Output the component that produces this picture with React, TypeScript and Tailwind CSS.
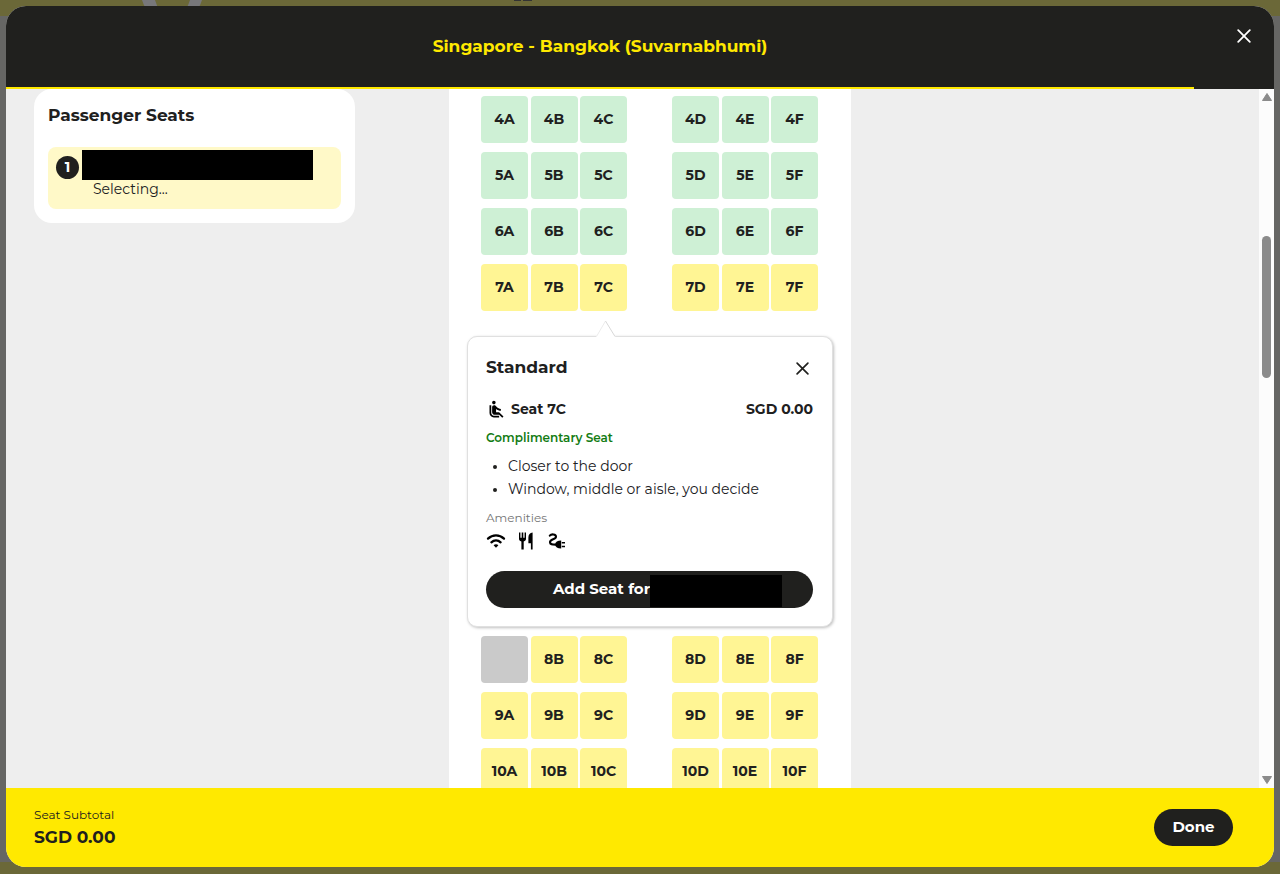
import { MdAirlineSeatReclineNormal } from "react-icons/md";

type SeatKind = "hot" | "standard" | "taken";

interface Seat {
  label: string;
  kind: SeatKind;
}

const LETTERS = ["A", "B", "C", "D", "E", "F"];

const seatColors: Record<SeatKind, string> = {
  hot: "bg-[#cef0d5]",
  standard: "bg-[#fff594]",
  taken: "bg-[#cacaca]",
};

function buildRow(num: number, kind: SeatKind, taken: string[] = []): Seat[] {
  return LETTERS.map((l) => ({
    label: `${num}${l}`,
    kind: taken.includes(l) ? "taken" : kind,
  }));
}

const rowsAbove = [
  buildRow(4, "hot"),
  buildRow(5, "hot"),
  buildRow(6, "hot"),
  buildRow(7, "standard"),
];
const rowsBelow = [
  buildRow(8, "standard", ["A"]),
  buildRow(9, "standard"),
  buildRow(10, "standard"),
];

function CloseIcon({ size }: { size: number }) {
  return (
    <svg width={size} height={size} viewBox="0 0 14 14" fill="none" stroke="currentColor" strokeWidth="1.8" strokeLinecap="round" aria-hidden>
      <path d="M1.2 1.2 12.8 12.8M12.8 1.2 1.2 12.8" />
    </svg>
  );
}

function WifiIcon() {
  return (
    <svg width="20" height="16" viewBox="0 0 20 16" aria-hidden>
      <path
        d="M2 5.6C6.500 1.200 13.500 1.200 18 5.600M5.400 9.300c2.600-2.500 6.600-2.500 9.200 0"
        fill="none"
        stroke="currentColor"
        strokeWidth="2.3"
        strokeLinecap="round"
      />
      <path d="M7.600 12.200c1.300-1.200 3.500-1.200 4.800 0L10 14.800Z" fill="currentColor" />
    </svg>
  );
}

function CutleryIcon() {
  return (
    <svg width="16" height="18" viewBox="0 0 16 18" fill="currentColor" aria-hidden>
      <path d="M1 .5h1.400v5.300h1.300V.5h1.600v5.300h1.300V.5H8v6.300c0 1.400-.800 2.200-2.300 2.600v8.100H3.400V9.400C1.800 9 1 8.200 1 6.800Z" />
      <path d="M14.600.5v17h-1.700v-6.300h-2.500V5.500c0-2.800 1.600-5 4.200-5Z" />
    </svg>
  );
}

function PowerIcon() {
  return (
    <svg width="18" height="16" viewBox="0 0 18 16" aria-hidden>
      <path
        d="M1.800 2.600C3.200.900 8 .800 8 3.700 8 6.700 2 6 2 9.300c0 2.200 2 2.300 5.500 2.300"
        fill="none"
        stroke="currentColor"
        strokeWidth="2.100"
        strokeLinecap="round"
      />
      <path d="M7 11.600C7.600 9 9.300 7.600 13.200 7.600v8c-3.900 0-5.600-1.400-6.200-4ZM13.800 9h3.200v1.600h-3.200ZM13.800 12.700h3.200v1.600h-3.200Z" fill="currentColor" />
    </svg>
  );
}

function SeatButton({ seat }: { seat: Seat }) {
  const taken = seat.kind === "taken";
  return (
    <button
      type="button"
      disabled={taken}
      aria-label={taken ? "Unavailable" : undefined}
      className={`h-[47px] w-[47px] rounded pb-0.5 text-sm font-bold ${seatColors[seat.kind]}`}
    >
      {taken ? null : seat.label}
    </button>
  );
}

function SeatRow({ seats }: { seats: Seat[] }) {
  return (
    <div className="flex justify-between pr-[33px] pl-8">
      {[seats.slice(0, 3), seats.slice(3)].map((group) => (
        <div key={group[0].label} className="flex w-[146px] justify-between">
          {group.map((seat) => (
            <SeatButton key={seat.label} seat={seat} />
          ))}
        </div>
      ))}
    </div>
  );
}

function SeatPopover() {
  return (
    <section
      aria-label="Seat 7C"
      className="relative mt-4 mr-[18px] ml-[18px] rounded-[10px] border border-[#e0e0e0] bg-white py-[18px] pr-[19px] pl-[18px] shadow-[1px_1px_3px_rgba(0,0,0,0.25)]"
    >
      <svg width="20" height="17" viewBox="0 0 20 17" className="absolute -top-[17px] left-[128px]" aria-hidden>
        <path d="M0 17 9.500 1 19.500 17Z" fill="#fff" />
        <path d="M.500 16.500 9.500 1" fill="none" stroke="#ececec" />
        <path d="M9.500 1 19 16.500" fill="none" stroke="#d8d8d8" />
      </svg>
      <div className="flex h-[26px] items-center justify-between">
        <h2 className="text-[17px] font-bold">Standard</h2>
        <button type="button" aria-label="Close seat details" className="mr-1">
          <CloseIcon size={13} />
        </button>
      </div>
      <div className="mt-4 flex h-6 items-center justify-between text-sm font-bold">
        <span className="flex items-center gap-1">
          <MdAirlineSeatReclineNormal size={21} className="text-black" />
          Seat 7C
        </span>
        <span>SGD 0.00</span>
      </div>
      <p className="mt-[9px] text-xs leading-4 font-semibold text-[#137c13]">Complimentary Seat</p>
      <ul className="mt-[9px] list-disc pl-[22px] text-sm leading-[23px] marker:text-xs">
        <li>Closer to the door</li>
        <li>Window, middle or aisle, you decide</li>
      </ul>
      <p className="mt-[9px] text-xs leading-4 text-[#757575]">Amenities</p>
      <div className="mt-[3px] flex h-6 items-center gap-3 text-black">
        <WifiIcon />
        <CutleryIcon />
        <span className="pl-0.5">
          <PowerIcon />
        </span>
      </div>
      <button
        type="button"
        className="mt-[18px] flex h-[37px] w-full items-center justify-center rounded-full bg-[#20201e] pl-9 text-[15px] font-bold text-white"
      >
        Add Seat for
        <span className="mt-[3px] h-8 w-[132px] bg-black" />
      </button>
    </section>
  );
}

function Scrollbar() {
  return (
    <div className="flex w-[15px] shrink-0 flex-col items-center bg-[#fcfcfc] py-1" aria-hidden>
      <svg width="10" height="8" viewBox="0 0 10 8" fill="#8b8b8b">
        <path d="M5 .500 9.500 7.500H.500Z" stroke="#8b8b8b" strokeLinejoin="round" />
      </svg>
      <div className="flex w-full grow flex-col items-center">
        <div className="basis-[20%]" />
        <div className="w-[9px] basis-[21%] rounded-full bg-[#8b8b8b]" />
      </div>
      <svg width="10" height="8" viewBox="0 0 10 8" fill="#8b8b8b">
        <path d="M5 7.500 9.500.500H.500Z" stroke="#8b8b8b" strokeLinejoin="round" />
      </svg>
    </div>
  );
}

export default function App() {
  return (
    <div className="relative h-screen bg-[#666664] font-['Montserrat',Inter,sans-serif] text-[#20201e]">
      <div className="absolute inset-x-0 top-0 h-4 overflow-hidden bg-[#6b6838]" aria-hidden>
        <svg width="540" height="16" viewBox="0 0 540 16">
          <path d="M142 0h13c2 6 4 11 8 16h-12c-4-4-7-10-9-16ZM190 0h12c-2 6-5 12-9 16h-12c4-4 7-10 9-16Z" fill="#77777a" />
          <path d="M514 0h7v1h-7zM523 0h9v1h-9z" fill="#333" />
        </svg>
      </div>
      <div className="absolute inset-x-0 bottom-0 h-3 bg-[#6b6838]" aria-hidden />

      <div className="relative h-full px-1.5 pt-1.5 pb-[7px]">
        <div role="dialog" aria-label="Seat selection" className="flex h-full flex-col overflow-hidden rounded-[20px] bg-[#eeeeee]">
          <header className="flex h-[83px] shrink-0 bg-[#20201e]">
            <div className="flex grow items-center justify-center border-b-2 border-[#ffe900]">
              <h1 className="text-[17px] font-bold text-[#ffe900]">Singapore - Bangkok (Suvarnabhumi)</h1>
            </div>
            <div className="flex w-20 items-start justify-end pt-[23px] pr-[23px] text-white">
              <button type="button" aria-label="Close">
                <CloseIcon size={14} />
              </button>
            </div>
          </header>

          <div className="flex min-h-0 grow">
            <main className="grid grow grid-cols-[415fr_402px_408fr] overflow-hidden pl-7">
              <aside>
                <div className="w-[321px] rounded-[18px] bg-white px-3.5 pt-3 pb-3.5">
                  <h2 className="text-[17px] leading-7 font-bold">Passenger Seats</h2>
                  <div className="mt-[18px] h-[62px] rounded-lg bg-[#fff9c8] pt-[3px] pl-2">
                    <div className="flex items-center">
                      <span className="mt-1 flex h-[23px] w-[23px] items-center justify-center rounded-full bg-[#20201e] text-sm font-bold text-white">
                        1
                      </span>
                      <span className="ml-[3px] h-[30px] w-[231px] bg-black" />
                    </div>
                    <p className="pl-[37px] text-sm leading-[18px]">Selecting...</p>
                  </div>
                </div>
              </aside>

              <div className="flex flex-col gap-[9px] bg-white pt-[7px]">
                {rowsAbove.map((seats) => (
                  <SeatRow key={seats[0].label} seats={seats} />
                ))}
                <SeatPopover />
                {rowsBelow.map((seats) => (
                  <SeatRow key={seats[0].label} seats={seats} />
                ))}
              </div>
            </main>
            <Scrollbar />
          </div>

          <footer className="flex h-[79px] shrink-0 items-center justify-between bg-[#ffe900] pr-[41px] pl-7">
            <div className="pb-0.5">
              <p className="text-xs leading-5">Seat Subtotal</p>
              <p className="text-[17px] leading-6 font-bold">SGD 0.00</p>
            </div>
            <button type="button" className="h-[37px] w-[79px] rounded-full bg-[#20201e] text-[15px] font-bold text-white">
              Done
            </button>
          </footer>
        </div>
      </div>
    </div>
  );
}
